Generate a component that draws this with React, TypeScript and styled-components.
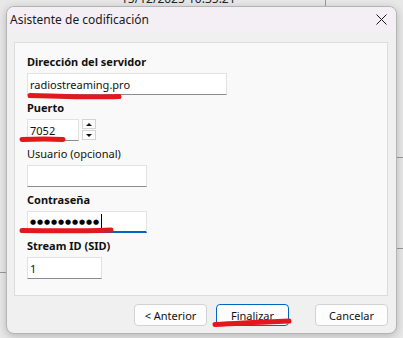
import React from 'react'
import styled, { createGlobalStyle } from 'styled-components'

const Global = createGlobalStyle`
    html, body {
        margin: 0;
        padding: 0;
    }
    body {
        width: 403px;
        height: 338px;
        overflow: hidden;
        font-family: "Segoe UI", "Noto Sans", sans-serif;
    }
`

const Desktop = styled.div`
    position: relative;
    width: 403px;
    height: 338px;
    overflow: hidden;
    background: #e8e8e8;
`
const BackText = styled.div`
    position: absolute;
    top: -9px;
    left: 121px;
    font-size: 12px;
    line-height: 16px;
    color: #222;
`
const BackLine = styled.div`
    position: absolute;
    background: #9a9a9a;
`
const Window = styled.div`
    position: absolute;
    left: 6px;
    top: 6px;
    width: 389px;
    height: 326px;
    display: flex;
    flex-direction: column;
    background: #f0f0f0;
    border: 1px solid #b4b4b4;
    border-radius: 8px;
    box-shadow: 0 2px 8px rgba(0, 0, 0, 0.22);
    overflow: hidden;
`
const TitleBar = styled.div`
    height: 25px;
    display: flex;
    align-items: center;
    justify-content: space-between;
    background: #f4eef5;
    padding-left: 3px;
`
const Title = styled.span`
    font-size: 12px;
    color: #1a1a1a;
`
const CloseButton = styled.div`
    width: 30px;
    height: 25px;
    display: flex;
    align-items: center;
    justify-content: center;
`
const Content = styled.div`
    flex: 1;
    display: flex;
    flex-direction: column;
    padding: 10px 8px 0 7px;
`
const Panel = styled.div`
    box-sizing: border-box;
    height: 254px;
    background: #f9f9f9;
    border: 1px solid #dcdcdc;
    padding: 11px 12px 0;
    display: flex;
    flex-direction: column;
    gap: 5px;
`
const Field = styled.div`
    display: flex;
    flex-direction: column;
    gap: 3px;
`
const Label = styled.div<{ $bold?: boolean }>`
    font-size: 11px;
    line-height: 16px;
    font-weight: ${p => (p.$bold ? 700 : 400)};
    color: #111;
`
const Row = styled.div`
    display: flex;
    align-items: flex-start;
    gap: 3px;
`
const TextBox = styled.div<{ $w: number; $focus?: boolean }>`
    box-sizing: border-box;
    width: ${p => p.$w}px;
    height: 22px;
    background: #fff;
    border: 1px solid #e2e2e2;
    border-bottom: ${p => (p.$focus ? '2px solid #0067c0' : '1px solid #8c8c8c')};
    padding: 0 2px;
    display: flex;
    align-items: center;
    font-size: 11px;
    color: #111;
`
const Dots = styled.span`
    font-family: "DejaVu Sans", sans-serif;
    font-size: 7px;
    letter-spacing: 0.9px;
    color: #000;
`
const Caret = styled.span`
    display: inline-block;
    width: 1px;
    height: 16px;
    background: #000;
    margin-left: 1px;
`
const Spin = styled.div`
    display: flex;
    flex-direction: column;
    gap: 1px;
`
const SpinButton = styled.div<{ $down?: boolean }>`
    box-sizing: border-box;
    width: 14px;
    height: 10px;
    background: #fdfdfd;
    border: 1px solid #d4d4d4;
    display: flex;
    align-items: center;
    justify-content: center;
    &::after {
        content: '';
        border-left: 3px solid transparent;
        border-right: 3px solid transparent;
        ${p => (p.$down ? 'border-top: 3px solid #111;' : 'border-bottom: 3px solid #111;')}
    }
`
const Footer = styled.div`
    display: flex;
    justify-content: flex-end;
    margin-top: 8px;
`
const Button = styled.div<{ $primary?: boolean; $gap?: number }>`
    box-sizing: border-box;
    width: 73px;
    height: 22px;
    margin-left: ${p => p.$gap ?? 0}px;
    display: flex;
    align-items: center;
    justify-content: center;
    font-size: 11px;
    color: #111;
    background: #fdfdfd;
    border: 1px solid ${p => (p.$primary ? '#0067c0' : '#d2d2d2')};
    border-radius: 4px;
`
const Marks = styled.svg`
    position: absolute;
    left: 0;
    top: 0;
    pointer-events: none;
`

const App = () => {
    return (
        <Desktop>
            <Global />
            <BackText>15/12/2025 10:35:21</BackText>
            <BackLine style={{ left: 325, top: 0, width: 1, height: 6 }} />
            <BackLine style={{ left: 0, top: 272, width: 6, height: 1 }} />
            <BackLine style={{ left: 397, top: 157, width: 6, height: 1 }} />
            <BackLine style={{ left: 397, top: 248, width: 6, height: 1 }} />
            <Window>
                <TitleBar>
                    <Title>Asistente de codificación</Title>
                    <CloseButton>
                        <svg width="11" height="11" viewBox="0 0 11 11">
                            <path d="M0.5 0.5L10.5 10.5M10.5 0.5L0.5 10.5" stroke="#1a1a1a" strokeWidth="1" />
                        </svg>
                    </CloseButton>
                </TitleBar>
                <Content>
                    <Panel>
                        <Field>
                            <Label $bold>Dirección del servidor</Label>
                            <TextBox $w={200}>radiostreaming.pro</TextBox>
                        </Field>
                        <Field>
                            <Label $bold>Puerto</Label>
                            <Row>
                                <TextBox $w={52}>7052</TextBox>
                                <Spin>
                                    <SpinButton />
                                    <SpinButton $down />
                                </Spin>
                            </Row>
                        </Field>
                        <Field>
                            <Label>Usuario (opcional)</Label>
                            <TextBox $w={120} />
                        </Field>
                        <Field>
                            <Label $bold>Contraseña</Label>
                            <TextBox $w={120} $focus>
                                <Dots>●●●●●●●●●●</Dots>
                                <Caret />
                            </TextBox>
                        </Field>
                        <Field>
                            <Label $bold>Stream ID (SID)</Label>
                            <TextBox $w={75}>1</TextBox>
                        </Field>
                    </Panel>
                    <Footer>
                        <Button>&lt; Anterior</Button>
                        <Button $primary $gap={9}>Finalizar</Button>
                        <Button $gap={26}>Cancelar</Button>
                    </Footer>
                </Content>
            </Window>
            <Marks width="403" height="338" viewBox="0 0 403 338">
                <g stroke="#e3181c" strokeLinecap="round" fill="none">
                    <path d="M30 95.5 C 60 96.5, 95 97.5, 119 96.5" strokeWidth="5" />
                    <path d="M22 139.5 C 38 139, 52 139, 63 139.5" strokeWidth="5" />
                    <path d="M22 230.5 C 50 231, 85 231, 111 230" strokeWidth="5" />
                    <path d="M215 324.5 C 240 323, 265 322, 289 321" strokeWidth="5" />
                </g>
            </Marks>
        </Desktop>
    )
}
export default App
